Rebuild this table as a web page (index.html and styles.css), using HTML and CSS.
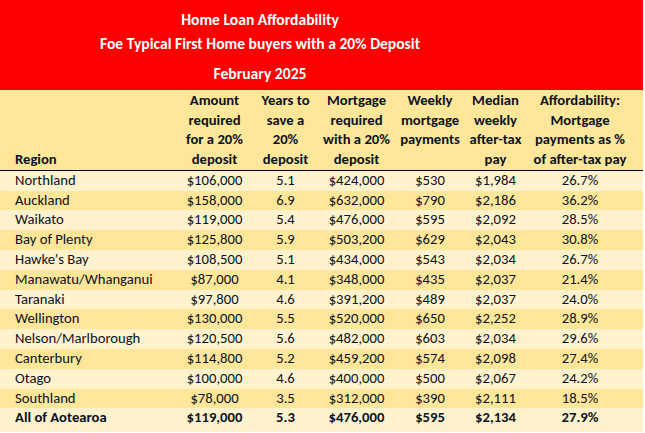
FILE: index.html
```html
<!DOCTYPE html>
<html lang="en">
<head>
<meta charset="utf-8">
<title>Home Loan Affordability</title>
<link rel="stylesheet" href="styles.css">
</head>
<body>
<div class="sheet">
  <header class="banner">
    <div class="title t1">Home Loan Affordability</div>
    <div class="title t2">Foe Typical First Home buyers with a 20% Deposit</div>
    <div class="title t3">February 2025</div>
  </header>
  <table class="grid">
    <colgroup>
      <col class="c-region"><col class="c-amount"><col class="c-years"><col class="c-mort"><col class="c-week"><col class="c-median"><col class="c-afford"><col class="c-pad">
    </colgroup>
    <thead>
      <tr>
        <th class="left bottom">Region</th>
        <th>Amount<br>required<br>for a 20%<br>deposit</th>
        <th>Years to<br>save a<br>20%<br>deposit</th>
        <th>Mortgage<br>required<br>with a 20%<br>deposit</th>
        <th>Weekly<br>mortgage<br>payments</th>
        <th>Median<br>weekly<br>after-tax<br>pay</th>
        <th>Affordability:<br>Mortgage<br>payments as %<br>of after-tax pay</th>
        <th></th>
      </tr>
    </thead>
    <tbody>
      <tr><td class="left">Northland</td><td>$106,000</td><td>5.1</td><td>$424,000</td><td>$530</td><td>$1,984</td><td>26.7%</td><td></td></tr>
      <tr><td class="left">Auckland</td><td>$158,000</td><td>6.9</td><td>$632,000</td><td>$790</td><td>$2,186</td><td>36.2%</td><td></td></tr>
      <tr><td class="left">Waikato</td><td>$119,000</td><td>5.4</td><td>$476,000</td><td>$595</td><td>$2,092</td><td>28.5%</td><td></td></tr>
      <tr><td class="left">Bay of Plenty</td><td>$125,800</td><td>5.9</td><td>$503,200</td><td>$629</td><td>$2,043</td><td>30.8%</td><td></td></tr>
      <tr><td class="left">Hawke's Bay</td><td>$108,500</td><td>5.1</td><td>$434,000</td><td>$543</td><td>$2,034</td><td>26.7%</td><td></td></tr>
      <tr><td class="left">Manawatu/Whanganui</td><td>$87,000</td><td>4.1</td><td>$348,000</td><td>$435</td><td>$2,037</td><td>21.4%</td><td></td></tr>
      <tr><td class="left">Taranaki</td><td>$97,800</td><td>4.6</td><td>$391,200</td><td>$489</td><td>$2,037</td><td>24.0%</td><td></td></tr>
      <tr><td class="left">Wellington</td><td>$130,000</td><td>5.5</td><td>$520,000</td><td>$650</td><td>$2,252</td><td>28.9%</td><td></td></tr>
      <tr><td class="left">Nelson/Marlborough</td><td>$120,500</td><td>5.6</td><td>$482,000</td><td>$603</td><td>$2,034</td><td>29.6%</td><td></td></tr>
      <tr><td class="left">Canterbury</td><td>$114,800</td><td>5.2</td><td>$459,200</td><td>$574</td><td>$2,098</td><td>27.4%</td><td></td></tr>
      <tr><td class="left">Otago</td><td>$100,000</td><td>4.6</td><td>$400,000</td><td>$500</td><td>$2,067</td><td>24.2%</td><td></td></tr>
      <tr><td class="left">Southland</td><td>$78,000</td><td>3.5</td><td>$312,000</td><td>$390</td><td>$2,111</td><td>18.5%</td><td></td></tr>
      <tr class="total"><td class="left">All of Aotearoa</td><td>$119,000</td><td>5.3</td><td>$476,000</td><td>$595</td><td>$2,134</td><td>27.9%</td><td></td></tr>
    </tbody>
  </table>
</div>
</body>
</html>
```

FILE: styles.css
```css
html, body {
  margin: 0;
  padding: 0;
  background: #ffffff;
}

body {
  font-family: Carlito, Lato, "Liberation Sans", sans-serif;
  color: #0b1222;
}

.sheet {
  width: 643px;
}

.banner {
  background: #ff0000;
  height: 90px;
  display: flex;
  flex-direction: column;
  box-sizing: border-box;
  padding-right: 123px;
}

.title {
  color: #ffffff;
  font-weight: bold;
  font-size: 15.6px;
  text-align: center;
}

.t1 { line-height: 24px; margin-top: 8px; }
.t2 { line-height: 24px; }
.t3 { line-height: 24px; margin-top: 6px; }

.grid {
  width: 643px;
  table-layout: fixed;
  border-collapse: collapse;
  font-size: 14.67px;
}

.c-region { width: 178px; }
.c-amount { width: 73px; }
.c-years { width: 69px; }
.c-mort { width: 73px; }
.c-week { width: 74px; }
.c-median { width: 57px; }
.c-afford { width: 112px; }
.c-pad { width: 7px; }

.grid th,
.grid td {
  padding: 0;
  text-align: center;
  white-space: nowrap;
}

.grid .left {
  text-align: left;
  padding-left: 15px;
}

.grid thead tr {
  background: #ffe699;
  border-bottom: 1px solid #000000;
}

.grid th {
  height: 80px;
  box-sizing: border-box;
  vertical-align: top;
  line-height: 19.7px;
  font-weight: bold;
  padding-top: 1px;
}

.grid th.bottom {
  vertical-align: bottom;
  padding-top: 0;
}

.grid td {
  height: 19.8px;
  line-height: 19.8px;
}

.grid tbody tr:nth-child(odd) { background: #fff2cc; }
.grid tbody tr:nth-child(even) { background: #ffe699; }

.grid tr.total td {
  font-weight: bold;
  height: 24px;
  vertical-align: top;
}
```
